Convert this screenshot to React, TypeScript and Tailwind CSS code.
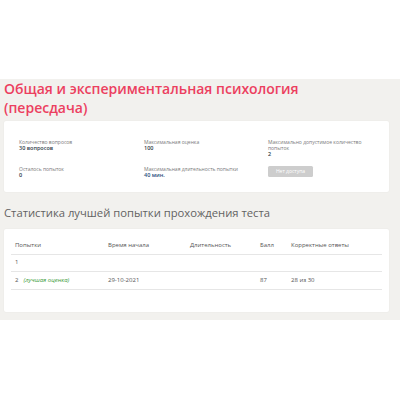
import React from 'react';

const font = { fontFamily: '"Open Sans", "Noto Sans", sans-serif' };

type Row = { n: string; best?: boolean; start: string; duration: string; score: string; correct: string };

const rows: Row[] = [
  { n: '1', start: '', duration: '', score: '', correct: '' },
  { n: '2', best: true, start: '29-10-2021', duration: '', score: '87', correct: '28 из 30' },
];

const Info: React.FC<{ label: React.ReactNode; value?: string; valueClass?: string }> = ({ label, value, valueClass }) => (
  <div className="flex flex-col">
    <span className="text-[5px] leading-[6px] text-[#7a7a7a]">{label}</span>
    {value && <span className={`text-[5.5px] leading-[6px] font-semibold ${valueClass || 'text-[#2f3b48]'}`}>{value}</span>}
  </div>
);

const App: React.FC = () => {
  return (
    <div className="w-[400px] h-[400px] bg-white overflow-hidden" style={font}>
      <div className="h-[79px]" />
      <div className="bg-[#f2f1ee] px-[4px] pb-[8px] pr-[11px]">
        <h1 className="text-[14px] leading-[19px] font-semibold text-[#ec3f5f]">
          Общая и экспериментальная психология
          <br />
          (пересдача)
        </h1>

        <div className="mt-[4px] h-[71px] bg-white rounded-[2px] shadow-[0_0_2px_rgba(0,0,0,0.06)] pl-[15px] pt-[18px]">
          <div className="grid grid-cols-[125px_124px_1fr] gap-y-[9px]">
            <Info label="Количество вопросов" value="30 вопросов" />
            <Info label="Максимальная оценка" value="100" />
            <Info label={<>Максимально допустимое количество<br />попыток</>} value="2" />
            <Info label="Осталось попыток" value="0" />
            <Info label="Максимальная длительность попытки" value="40 мин." valueClass="text-[#1f4f7c]" />
            <div className="flex items-start">
              <span className="flex items-center justify-center w-[45px] h-[11px] rounded-[1.5px] bg-[#cdcdcd] text-white text-[5px] leading-none">
                Нет доступа
              </span>
            </div>
          </div>
        </div>

        <h2 className="mt-[13px] text-[11.25px] leading-[16px] text-[#626262]">
          Статистика лучшей попытки прохождения теста
        </h2>

        <div className="mt-[8px] h-[83px] bg-white rounded-[2px] shadow-[0_0_2px_rgba(0,0,0,0.06)] px-[7px] pt-[9px]">
          <table className="w-full border-collapse text-[6px] text-[#555]">
            <thead>
              <tr className="h-[16px] border-b border-[#e6e6e6] text-left">
                <th className="w-[97px] font-normal pl-[4px]">Попытки</th>
                <th className="w-[82px] font-normal">Время начала</th>
                <th className="w-[70px] font-normal">Длительность</th>
                <th className="w-[31px] font-normal">Балл</th>
                <th className="font-normal">Корректные ответы</th>
              </tr>
            </thead>
            <tbody>
              {rows.map((r) => (
                <tr key={r.n} className="h-[17.5px] border-b border-[#e6e6e6]">
                  <td className="pl-[4px]">
                    {r.n}
                    {r.best && <span className="ml-[5px] italic text-[#3a9a3a]">(лучшая оценка)</span>}
                  </td>
                  <td>{r.start}</td>
                  <td>{r.duration}</td>
                  <td>{r.score}</td>
                  <td>{r.correct}</td>
                </tr>
              ))}
            </tbody>
          </table>
        </div>
      </div>
    </div>
  );
};

export default App;
